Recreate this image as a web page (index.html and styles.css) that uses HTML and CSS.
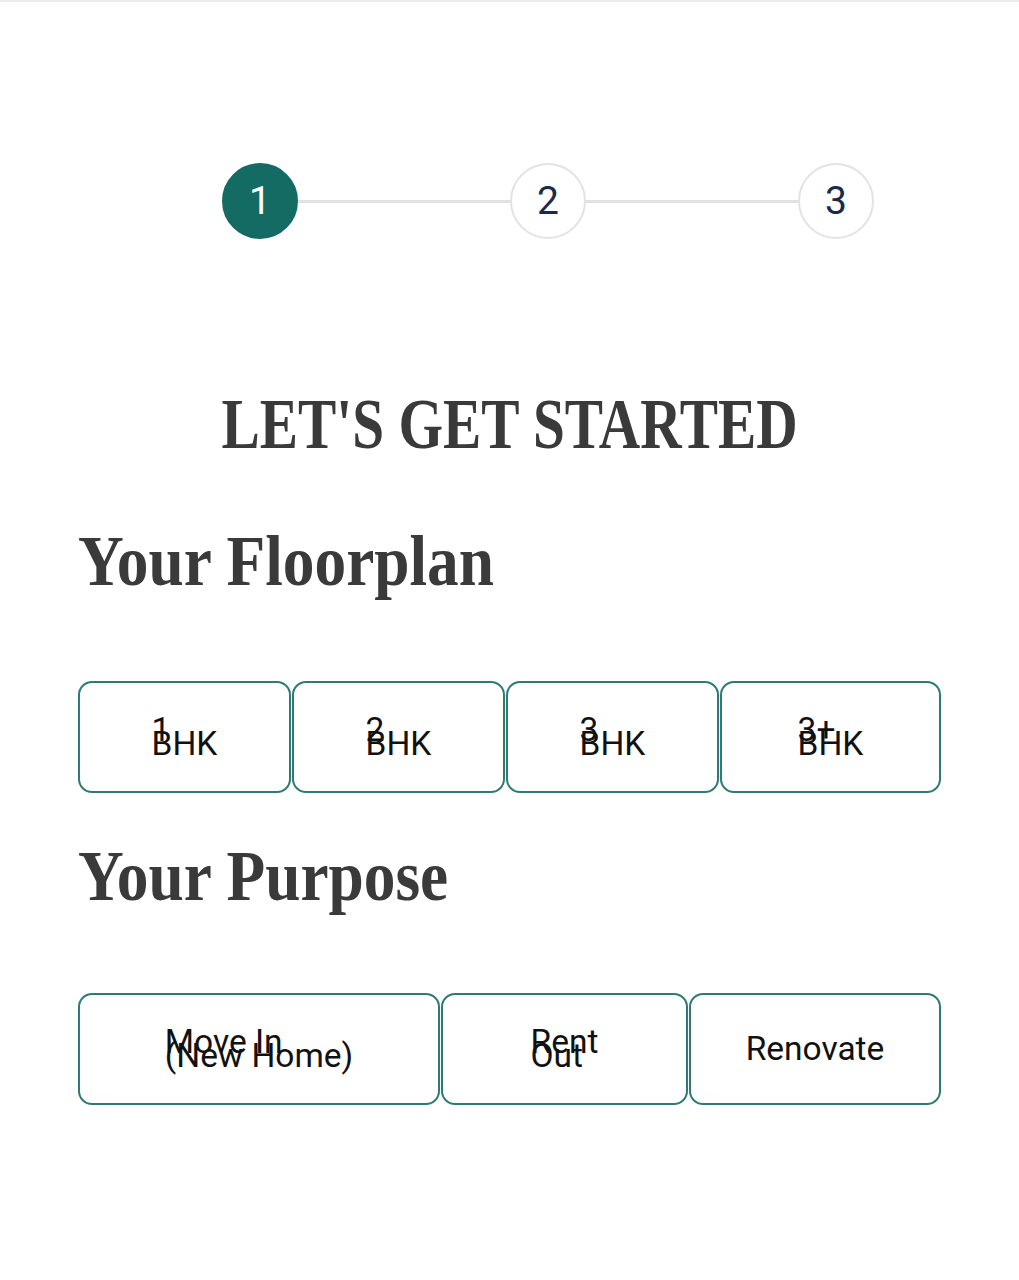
FILE: index.html
```html
<!DOCTYPE html>
<html lang="en">
<head>
<meta charset="utf-8">
<title>Let's get started</title>
<link rel="stylesheet" href="styles.css">
</head>
<body>
<div class="page">
  <div class="stepper">
    <div class="step active">1</div>
    <div class="bar"></div>
    <div class="step">2</div>
    <div class="bar"></div>
    <div class="step">3</div>
  </div>
  <h1 class="title"><span>LET'S GET STARTED</span></h1>
  <h2 class="section"><span>Your Floorplan</span></h2>
  <div class="options four">
    <button class="opt"><span class="lbl">1<br>BHK</span></button>
    <button class="opt"><span class="lbl">2<br>BHK</span></button>
    <button class="opt"><span class="lbl">3<br>BHK</span></button>
    <button class="opt"><span class="lbl">3+<br>BHK</span></button>
  </div>
  <h2 class="section purpose"><span>Your Purpose</span></h2>
  <div class="options three">
    <button class="opt"><span class="lbl">Move In<br>(New Home)</span></button>
    <button class="opt"><span class="lbl">Rent<br>Out</span></button>
    <button class="opt"><span class="lbl">Renovate</span></button>
  </div>
</div>
</body>
</html>
```
FILE: styles.css
```css
html, body {
  margin: 0;
  padding: 0;
  background: #ffffff;
}
body {
  border-top: 2px solid #ebebeb;
  font-family: Roboto, "Liberation Sans", sans-serif;
}
.page {
  padding: 0 78px;
}
.stepper {
  display: flex;
  align-items: center;
  width: 652px;
  margin: 161px 0 0 144px;
}
.step {
  box-sizing: border-box;
  width: 76px;
  height: 76px;
  flex: none;
  border-radius: 50%;
  border: 2px solid #e3e3e3;
  display: flex;
  align-items: center;
  justify-content: center;
  font-size: 39px;
  color: #1b2a4a;
  background: #fff;
}
.step.active {
  background: #136b64;
  border-color: #136b64;
  color: #fff;
}
.bar {
  flex: 1;
  height: 3px;
  background: #e2e2e2;
}
.title {
  margin: 149px 0 0 0;
  text-align: center;
  font-family: "Liberation Serif", serif;
  font-weight: bold;
  font-size: 72px;
  line-height: 72px;
  color: #3a3a3a;
}
.title span {
  display: inline-block;
  transform: scaleX(0.797);
  white-space: nowrap;
}
.section {
  margin: 65px 0 0 0;
  font-family: "Liberation Serif", serif;
  font-weight: bold;
  font-size: 72px;
  line-height: 72px;
  color: #3a3a3a;
}
.section span {
  display: inline-block;
  transform: scaleX(0.88);
  transform-origin: left center;
  white-space: nowrap;
}
.section.purpose {
  margin-top: 47px;
}
.options {
  display: grid;
  gap: 1px;
  margin-top: 84px;
}
.options.four {
  grid-template-columns: 213px 213px 213px 221px;
}
.options.three {
  grid-template-columns: 362px 247px 252px;
  margin-top: 81px;
}
.opt {
  box-sizing: border-box;
  height: 112px;
  border: 2px solid #2e7b75;
  border-radius: 14px;
  background: #fff;
  display: flex;
  align-items: center;
  justify-content: center;
  padding: 0;
  font-family: Roboto, "Liberation Sans", sans-serif;
  font-size: 33.5px;
  color: #111;
}
.lbl {
  display: block;
  text-align: left;
  line-height: 14px;
  white-space: nowrap;
}
```
